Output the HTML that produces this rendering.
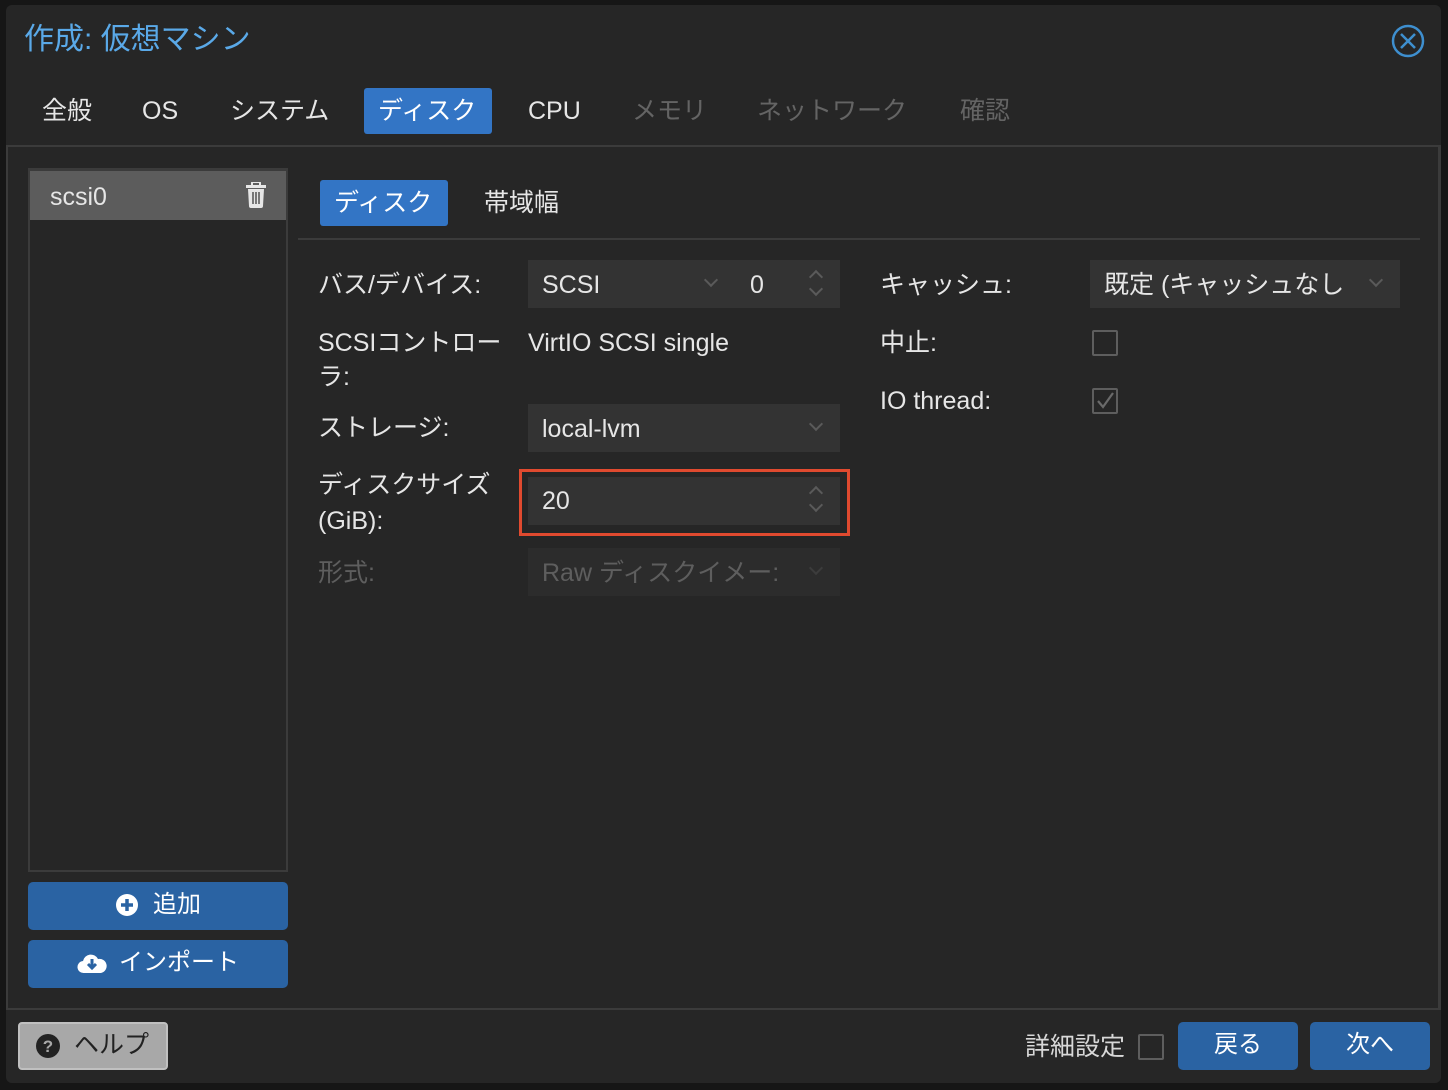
<!DOCTYPE html>
<html><head><meta charset="utf-8"><style>
*{margin:0;padding:0;box-sizing:border-box}
body{width:1448px;height:1090px;background:#161616;position:relative;overflow:hidden;font-family:"Liberation Sans","Noto Sans CJK JP",sans-serif;color:#e6e6e6}
.a{position:absolute;white-space:nowrap}
.t{font-size:25px;line-height:30px}
.dlg{position:absolute;left:6px;top:5px;width:1435px;height:1078px;background:#262626;border-radius:6px}
.fld{position:absolute;background:#333333}
.btn{position:absolute;background:#2a63a3;border-radius:5px;color:#fff;font-size:24px;line-height:28px;display:flex;align-items:center;justify-content:center;padding-bottom:2px}
.btn span{position:relative;top:0}
.chev{position:absolute;width:10px;height:10px;border-right:2px solid #5a5a5a;border-bottom:2px solid #5a5a5a;transform:rotate(45deg)}
.up{position:absolute;width:10px;height:10px;border-left:2px solid #5a5a5a;border-top:2px solid #5a5a5a;transform:rotate(45deg)}
.cb{position:absolute;width:26px;height:26px;border:2px solid #5e5e5e;border-radius:2px}
</style></head><body>
<div class="dlg"></div>
<div class="a" style="left:24px;top:21px;font-size:30px;line-height:38px;color:#5aa9e8">作成: 仮想マシン</div>
<svg class="a" style="left:1390px;top:23px" width="36" height="36" viewBox="0 0 36 36"><circle cx="18" cy="18" r="15" fill="none" stroke="#3e8fcf" stroke-width="2.5"/><path d="M11 11L25 25M25 11L11 25" stroke="#3e8fcf" stroke-width="2.5"/></svg>
<div class="a t" style="left:42px;top:96px">全般</div>
<div class="a t" style="left:142px;top:96px">OS</div>
<div class="a t" style="left:230px;top:96px">システム</div>
<div class="a" style="left:364px;top:88px;width:128px;height:46px;background:#3375c5;border-radius:3px"></div>
<div class="a t" style="left:378px;top:96px;color:#fff">ディスク</div>
<div class="a t" style="left:528px;top:96px">CPU</div>
<div class="a t" style="left:632px;top:96px;color:#646464">メモリ</div>
<div class="a t" style="left:757px;top:96px;color:#646464">ネットワーク</div>
<div class="a t" style="left:960px;top:96px;color:#646464">確認</div>
<div class="a" style="left:6px;top:145px;width:1435px;height:865px;border:2px solid #3b3b3b;border-right-width:3px"></div>
<div class="a" style="left:28px;top:168px;width:260px;height:704px;border:2px solid #3b3b3b;border-top-width:3px"></div>
<div class="a" style="left:30px;top:171px;width:256px;height:49px;background:#5c5c5c"></div>
<div class="a t" style="left:50px;top:182px">scsi0</div>
<svg class="a" style="left:245px;top:182px" width="22" height="26" viewBox="0 0 22 26"><rect x="1" y="3" width="20" height="3" fill="#e6e6e6"/><rect x="7" y="0" width="8" height="4" rx="1" fill="none" stroke="#e6e6e6" stroke-width="2"/><path d="M3 7h16l-1 17a2 2 0 0 1-2 2H6a2 2 0 0 1-2-2z" fill="#e6e6e6"/><path d="M8 10v12M11 10v12M14 10v12" stroke="#5c5c5c" stroke-width="1.6"/></svg>
<div class="btn" style="left:28px;top:882px;width:260px;height:48px"><svg width="24" height="24" viewBox="0 0 24 24" style="margin-right:14px"><circle cx="12" cy="12" r="11" fill="#fff"/><path d="M12 6v12M6 12h12" stroke="#2a63a3" stroke-width="3.5"/></svg>追加</div>
<div class="btn" style="left:28px;top:940px;width:260px;height:48px"><svg width="30" height="24" viewBox="0 0 30 24" style="margin-right:12px"><path d="M7 22a6 6 0 0 1-1-12 8 8 0 0 1 15-2 6 6 0 0 1 3 14z" fill="#fff"/><path d="M15 8v8M11 13l4 4 4-4" stroke="#2a63a3" stroke-width="3" fill="none"/></svg>インポート</div>
<div class="a" style="left:320px;top:180px;width:128px;height:46px;background:#3375c5;border-radius:3px"></div>
<div class="a t" style="left:334px;top:188px;color:#fff">ディスク</div>
<div class="a t" style="left:484px;top:188px">帯域幅</div>
<div class="a" style="left:298px;top:238px;width:1122px;height:2px;background:#3b3b3b"></div>
<div class="a t" style="left:318px;top:270px">バス/デバイス:</div>
<div class="fld" style="left:528px;top:260px;width:312px;height:48px"></div>
<div class="a t" style="left:542px;top:270px">SCSI</div>
<div class="chev" style="left:706px;top:275px"></div>
<div class="a t" style="left:750px;top:270px">0</div>
<div class="up" style="left:811px;top:272px"></div><div class="chev" style="left:811px;top:284px"></div>
<div class="a t" style="left:318px;top:328px">SCSIコントロー</div>
<div class="a t" style="left:318px;top:362px">ラ:</div>
<div class="a t" style="left:528px;top:328px">VirtIO SCSI single</div>
<div class="a t" style="left:318px;top:413px">ストレージ:</div>
<div class="fld" style="left:528px;top:404px;width:312px;height:48px"></div>
<div class="a t" style="left:542px;top:414px">local-lvm</div>
<div class="chev" style="left:811px;top:419px"></div>
<div class="a t" style="left:318px;top:470px">ディスクサイズ</div>
<div class="a t" style="left:318px;top:506px">(GiB):</div>
<div class="a" style="left:519px;top:469px;width:331px;height:67px;border:3px solid #e04a2f"></div>
<div class="fld" style="left:528px;top:477px;width:312px;height:48px"></div>
<div class="a t" style="left:542px;top:486px">20</div>
<div class="up" style="left:811px;top:488px"></div><div class="chev" style="left:811px;top:500px"></div>
<div class="a t" style="left:318px;top:558px;color:#5e5e5e">形式:</div>
<div class="fld" style="left:528px;top:548px;width:312px;height:48px;background:#2c2c2c"></div>
<div class="a t" style="left:542px;top:558px;color:#5e5e5e;width:240px;overflow:hidden">Raw ディスクイメー:</div>
<div class="chev" style="left:811px;top:563px;border-color:#3c3c3c"></div>
<div class="a t" style="left:880px;top:270px">キャッシュ:</div>
<div class="fld" style="left:1090px;top:260px;width:310px;height:48px"></div>
<div class="a t" style="left:1104px;top:270px">既定 (キャッシュなし</div>
<div class="chev" style="left:1371px;top:275px"></div>
<div class="a t" style="left:880px;top:328px">中止:</div>
<div class="cb" style="left:1092px;top:330px"></div>
<div class="a t" style="left:880px;top:386px">IO thread:</div>
<div class="cb" style="left:1092px;top:388px"></div>
<svg class="a" style="left:1094px;top:390px" width="22" height="22" viewBox="0 0 22 22"><path d="M4 11l5 6L19 3" stroke="#6a6a6a" stroke-width="2.2" fill="none"/></svg>
<div class="a" style="left:18px;top:1022px;width:150px;height:48px;background:#a8a8a8;border:2px solid #c0c0c0;border-radius:4px"></div>
<svg class="a" style="left:36px;top:1034px" width="24" height="24" viewBox="0 0 24 24"><circle cx="12" cy="12" r="12" fill="#222"/><text x="12" y="18" text-anchor="middle" font-size="17" font-weight="bold" fill="#a8a8a8" font-family="Liberation Sans">?</text></svg>
<div class="a t" style="left:74px;top:1030px;color:#222">ヘルプ</div>
<div class="a t" style="left:1025px;top:1032px;color:#d8d8d8">詳細設定</div>
<div class="cb" style="left:1138px;top:1034px"></div>
<div class="btn" style="left:1178px;top:1022px;width:120px;height:48px">戻る</div>
<div class="btn" style="left:1310px;top:1022px;width:120px;height:48px">次へ</div>
</body></html>
